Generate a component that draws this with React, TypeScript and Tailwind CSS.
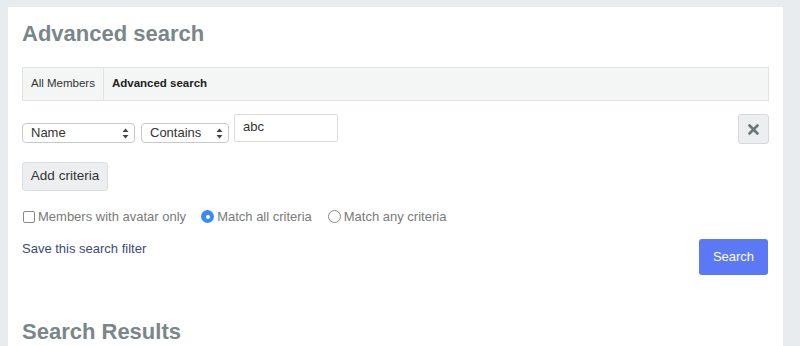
import React from 'react';

const font = { fontFamily: '"Liberation Sans", Arial, Helvetica, sans-serif' };

const SelectBox = ({ label, width }: { label: string; width: string }) => (
  <div className={`${width} h-[20px] border border-[#c9c9c9] rounded-[4px] bg-white flex items-center justify-between pl-[8px] pr-[5px] text-[13px] text-[#333]`}>
    <span>{label}</span>
    <svg width="7" height="11" viewBox="0 0 7 11">
      <path d="M3.5 0.5 L6.5 4 L0.5 4 Z" fill="#444" />
      <path d="M3.5 10.5 L6.5 7 L0.5 7 Z" fill="#444" />
    </svg>
  </div>
);

export default function App() {
  return (
    <div className="w-[800px] h-[346px] bg-[#e9ecee] pt-[7px] pl-[8px] pr-[17px] overflow-hidden" style={font}>
      <div className="bg-white h-full px-[14px] pt-[12px]">
        <h1 className="text-[22px] leading-[30px] font-bold text-[#7b8689]">Advanced search</h1>

        <div className="mt-[18px] h-[34px] bg-[#f4f5f5] border border-[#e1e3e3] flex items-stretch text-[11.5px]">
          <div className="px-[8px] flex items-center text-[#333] border-r border-[#e1e3e3]">All Members</div>
          <div className="px-[8px] flex items-center font-bold text-[#222]">Advanced search</div>
        </div>

        <div className="mt-[13px] flex items-start">
          <div className="mt-[9px] flex gap-[6px]">
            <SelectBox label="Name" width="w-[113px]" />
            <SelectBox label="Contains" width="w-[88px]" />
          </div>
          <div className="ml-[5px] w-[104px] h-[28px] border border-[#dcdcdc] rounded-[2px] pl-[8px] pt-[5px] text-[13px] leading-[14px] text-[#333]">abc</div>
          <button className="ml-auto w-[31px] h-[30px] bg-[#eceeef] border border-[#d6d9da] rounded-[3px] flex items-center justify-center">
            <svg width="11" height="11" viewBox="0 0 11 11">
              <path d="M1.5 1.5 L9.5 9.5 M9.5 1.5 L1.5 9.5" stroke="#6b7678" strokeWidth="2.6" strokeLinecap="round" />
            </svg>
          </button>
        </div>

        <button className="mt-[18px] h-[29px] w-[86px] bg-[#eceeef] border border-[#dcdfe0] rounded-[3px] text-[13.5px] text-[#333]">Add criteria</button>

        <div className="mt-[16px] flex items-center text-[13px] text-[#7a7a7a]">
          <span className="w-[12px] h-[12px] border border-[#8a8a8a] rounded-[2px] bg-white ml-[1px]"></span>
          <span className="ml-[3px]">Members with avatar only</span>
          <span className="ml-[15px] w-[13px] h-[13px] rounded-full bg-[#3b8bf2] flex items-center justify-center">
            <span className="w-[4px] h-[4px] rounded-full bg-white"></span>
          </span>
          <span className="ml-[3px]">Match all criteria</span>
          <span className="ml-[16px] w-[13px] h-[13px] rounded-full border border-[#8a8a8a] bg-white"></span>
          <span className="ml-[3px]">Match any criteria</span>
        </div>

        <div className="mt-[12px] flex items-start justify-between">
          <a className="text-[13px] text-[#3d4a7c]">Save this search filter</a>
          <button className="w-[69px] h-[36px] bg-[#5b78f5] rounded-[3px] text-white text-[13px] mr-[1px]">Search</button>
        </div>

        <h2 className="mt-[42px] text-[22px] leading-[30px] font-bold text-[#7b8689]">Search Results</h2>
      </div>
    </div>
  );
}
